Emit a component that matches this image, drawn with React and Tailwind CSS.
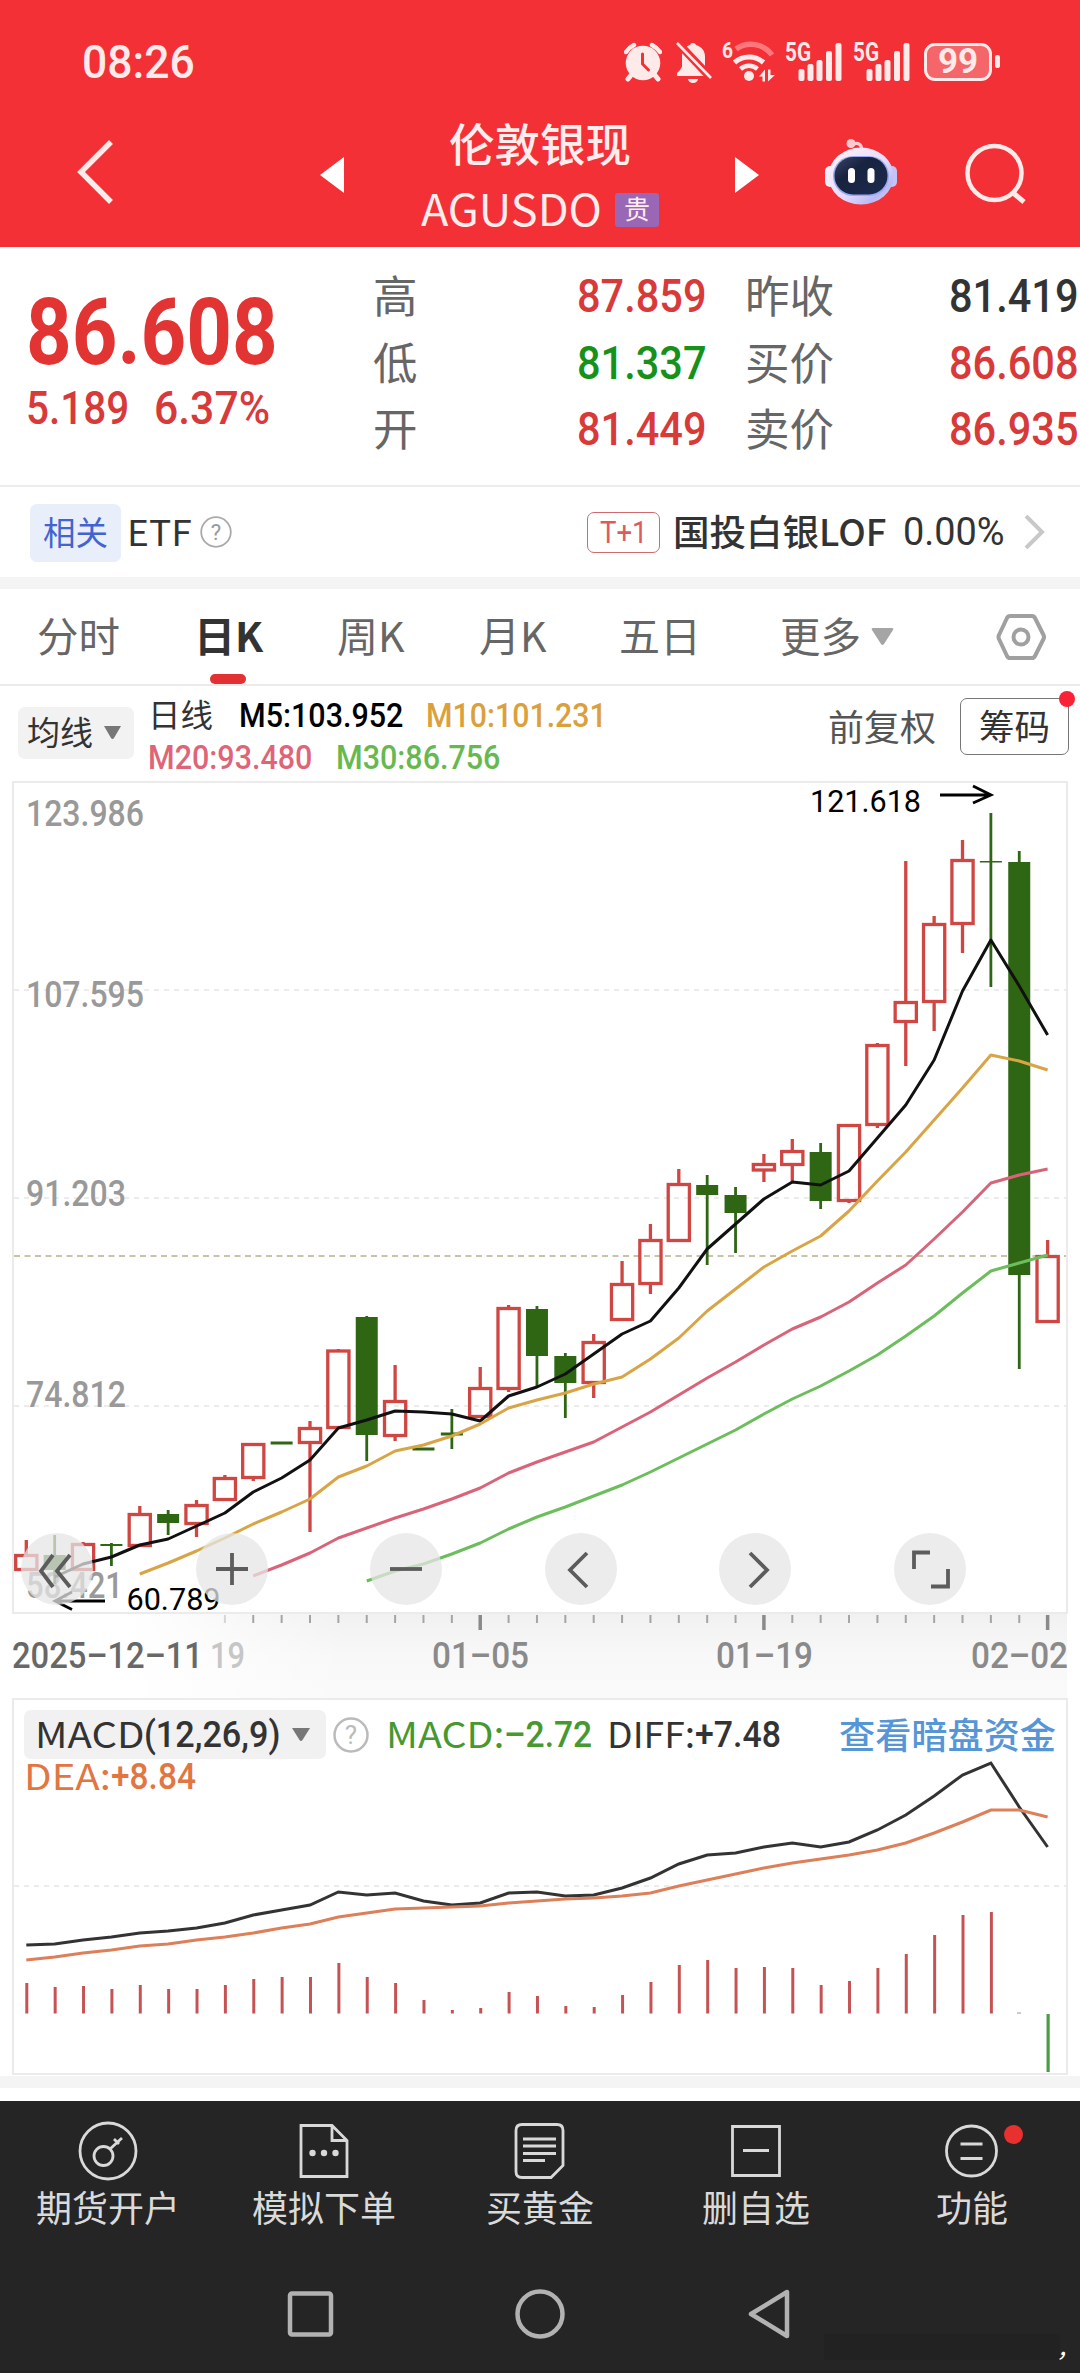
import React, { useLayoutEffect, useRef, useState } from 'react'

// Narrow numerals: squeezes the text to the given width
function Fit({ w, className = '', children }) {
  const ref = useRef(null)
  const [scale, setScale] = useState(1)

  useLayoutEffect(() => {
    if (ref.current) setScale(w / ref.current.offsetWidth)
  }, [w, children])

  return (
    <span className={`block shrink-0 leading-none ${className}`} style={{ width: w }}>
      <span ref={ref} className="inline-block origin-left whitespace-pre" style={{ transform: `scaleX(${scale})` }}>
        {children}
      </span>
    </span>
  )
}

const num = "font-['Roboto','Noto_Sans_CJK_SC',sans-serif]"

const STEP = 28.37
const px = (i) => 26.3 + STEP * i

// [type, high, top, bottom, low]
const candles = [
  ['r', 1539, 1553, 1570, 1570], ['g', 1534, 1554, 1569, 1583], ['r', 1541, 1542, 1570, 1570],
  ['g', 1542, 1543, 1545, 1565], ['r', 1505, 1512, 1546, 1546], ['g', 1509, 1513, 1522, 1534],
  ['r', 1499, 1503, 1524, 1536], ['r', 1474, 1476, 1500, 1500], ['r', 1442, 1442, 1478, 1480],
  ['g', 1441, 1440.5, 1443.5, 1443], ['r', 1420, 1426, 1443, 1531], ['r', 1348, 1348.5, 1428, 1428],
  ['g', 1315, 1316, 1434, 1460], ['r', 1364, 1399, 1436, 1440], ['g', 1447, 1446.5, 1449.5, 1449],
  ['g', 1408, 1431.5, 1434.5, 1448], ['r', 1366, 1386, 1417, 1417], ['r', 1304, 1306, 1389, 1391],
  ['g', 1305, 1308, 1355, 1386], ['g', 1352, 1355, 1382, 1417], ['r', 1333, 1340, 1383, 1397],
  ['r', 1260, 1282, 1320, 1320], ['r', 1223, 1238, 1284, 1293], ['r', 1168, 1182, 1241, 1241],
  ['g', 1174, 1184, 1194, 1264], ['g', 1186, 1194, 1212, 1252], ['r', 1153, 1162, 1170.5, 1181],
  ['r', 1138, 1149, 1165, 1180], ['g', 1142, 1151, 1200, 1208], ['r', 1123, 1123, 1201, 1202],
  ['r', 1042, 1043, 1125, 1127], ['r', 860, 1000, 1022, 1065], ['r', 915, 922, 1002, 1030],
  ['r', 839, 858, 924, 952], ['g', 812, 860, 861.5, 986], ['g', 850, 861, 1274, 1368],
  ['r', 1239, 1254, 1322, 1322],
]

const ma5 = [1576, 1563, 1556, 1544, 1538, 1525, 1512, 1491, 1477, 1459, 1427, 1419, 1410, 1411, 1413, 1420, 1395, 1386, 1373, 1353, 1333, 1320, 1287, 1248, 1223, 1198, 1181, 1184, 1170, 1137, 1104, 1059, 990, 939, 985, 1034]
const ma10 = [1573, 1562, 1550, 1537, 1523, 1511, 1498, 1476, 1465, 1450, 1444, 1435, 1423, 1407, 1399, 1392, 1383, 1376, 1358, 1337, 1310, 1288, 1266, 1250, 1235, 1210, 1180, 1151, 1119, 1087, 1054, 1060, 1069]
const ma20 = [1575, 1564, 1552, 1537, 1527, 1517, 1508, 1498, 1487, 1472, 1461, 1451, 1441, 1426, 1411, 1394, 1377, 1361, 1344, 1328, 1316, 1301, 1282, 1264, 1238, 1211, 1182, 1174, 1168]
const ma30 = [1580, 1570, 1563, 1553, 1542, 1528, 1516, 1506, 1495, 1484, 1471, 1457, 1443, 1429, 1413, 1398, 1385, 1370, 1354, 1335, 1315, 1292, 1270, 1262, 1254]

const diff = [1945, 1944, 1940, 1937, 1933, 1931, 1928, 1923, 1915, 1910, 1905, 1892, 1895, 1893, 1901, 1905, 1903, 1893, 1892, 1896, 1895, 1888, 1878, 1864, 1855, 1853, 1847, 1843, 1847, 1842, 1830, 1815, 1796, 1775, 1763, 1807, 1847]
const dea = [1960, 1957, 1953, 1950, 1946, 1944, 1940, 1937, 1933, 1928, 1924, 1917, 1913, 1909, 1908, 1907, 1906, 1903, 1901, 1899, 1898, 1896, 1893, 1886, 1880, 1874, 1868, 1863, 1859, 1855, 1850, 1843, 1833, 1822, 1810, 1810, 1817]
const macd = [1983, 1987, 1986, 1989, 1985, 1989, 1989, 1985, 1979, 1977, 1977, 1963, 1977, 1983, 2000, 2010, 2008, 1992, 1996, 2006, 2007, 1995, 1982, 1965, 1960, 1968, 1967, 1968, 1985, 1981, 1968, 1954, 1935, 1915, 1912]

const points = (ys, start) => ys.map((y, i) => `${px(i + start)},${y}`).join(' ')

function Signal() {
  return (
    <svg className="overflow-visible" width="57" height="40" viewBox="0 0 57 40" fill="#ffeaea">
      <text x="0" y="19" fontSize="25" fontWeight="700" textLength="26" lengthAdjust="spacingAndGlyphs" fontFamily="Roboto">5G</text>
      <rect x="13.5" y="27" width="6" height="12" rx="2" />
      <rect x="22.5" y="22" width="6" height="17" rx="2" />
      <rect x="31.5" y="18" width="6" height="21" rx="2" />
      <rect x="41" y="9" width="6" height="30" rx="2" />
      <rect x="50.5" y="1" width="6" height="38" rx="2" />
    </svg>
  )
}

function StatusBar() {
  return (
    <div className="flex h-[120px] items-center pt-[3px]">
      <Fit w={113} className={`${num} ml-[82px] text-[46px] font-medium text-[#ffeaea]`}>08:26</Fit>
      {/* alarm */}
      <svg className="ml-[429px]" width="38" height="40" viewBox="0 0 38 40">
        <path d="M2 10a22 22 0 0 1 8-7M28 3a22 22 0 0 1 8 7" fill="none" stroke="#ffeaea" strokeWidth="4.5" strokeLinecap="round" />
        <path d="M8 32l-4 5M30 32l4 5" stroke="#ffeaea" strokeWidth="5" strokeLinecap="round" />
        <circle cx="19" cy="21" r="17.3" fill="#ffeaea" />
        <path d="M18.5 12v10l6 6" fill="none" stroke="#f23036" strokeWidth="3" strokeLinecap="round" />
      </svg>
      {/* muted bell */}
      <svg className="ml-[13px]" width="38" height="42" viewBox="0 0 38 42">
        <path d="M18 2a3 3 0 0 1 3 2c6 2 9 6 9 12v9c0 3 4 6 4 8v2H2v-2c0-2 5-5 5-8V15c0-5 3-9 8-11a3 3 0 0 1 3-2z" fill="#ffeaea" />
        <path d="M13 38h10a5 4 0 0 1-10 0z" fill="#ffeaea" />
        <path d="M1 0l34 36" stroke="#f23036" strokeWidth="8" />
        <path d="M2 2l34 35" stroke="#ffeaea" strokeWidth="2.6" />
      </svg>
      {/* wifi 6 */}
      <svg className="ml-[9px] overflow-visible" width="52" height="42" viewBox="0 0 52 42" fill="none">
        <text x="0" y="17" fontSize="22" fontWeight="700" textLength="11" lengthAdjust="spacingAndGlyphs" fontFamily="Roboto" fill="#ffeaea">6</text>
        <path d="M14 8a26 26 0 0 1 36 6" stroke="#ff777c" strokeWidth="5.5" />
        <path d="M12.500 21.500a22 22 0 0 1 29 0" stroke="#ffeaea" strokeWidth="5" />
        <path d="M18.500 28a13 13 0 0 1 17 0" stroke="#ffeaea" strokeWidth="4.500" />
        <circle cx="27" cy="35" r="5" fill="#ffeaea" />
        <path d="M43 28.500v12h-2.500v-5H37zM46 28.500v12l7-6.500h-4.500v-5.500z" fill="#ffeaea" />
      </svg>
      <div className="ml-[11px]"><Signal /></div>
      <div className="ml-[11px]"><Signal /></div>
      <div className="ml-[14px] flex items-center">
        <div className="flex h-[38px] w-[68px] items-center justify-center rounded-[11px] border-[3px] border-[#ffeaea] bg-[#f5666a]">
          <Fit w={40} className={`${num} text-[35px] font-bold text-[#ffeaea]`}>99</Fit>
        </div>
        <div className="ml-[3px] h-[13px] w-[5px] rounded-[2px] bg-[#ffeaea]" />
      </div>
    </div>
  )
}

function Robot() {
  return (
    <svg className="ml-[65px] mt-[18px]" width="74" height="70" viewBox="0 0 74 70">
      <defs>
        <linearGradient id="shell" x1="0" y1="0" x2="1" y2="1">
          <stop offset="0" stopColor="#fff3f6" />
          <stop offset="0.55" stopColor="#e6dcfa" />
          <stop offset="0.8" stopColor="#b9b9f4" />
          <stop offset="1" stopColor="#f3dcee" />
        </linearGradient>
        <linearGradient id="face" x1="0" y1="0" x2="1" y2="1">
          <stop offset="0" stopColor="#3b4566" />
          <stop offset="0.35" stopColor="#17233f" />
          <stop offset="1" stopColor="#1d2b4d" />
        </linearGradient>
      </defs>
      <path d="M29 6c6-2 9 1 9 7" fill="none" stroke="#ffc9cf" strokeWidth="3" />
      <circle cx="27" cy="5.500" r="4.500" fill="#ffc9cf" />
      <rect x="1" y="28" width="10" height="21" rx="5" fill="#f1ebfb" />
      <rect x="63" y="28" width="10" height="21" rx="5" fill="#c3c4f6" />
      <ellipse cx="37" cy="38" rx="32.500" ry="28.500" fill="url(#shell)" />
      <rect x="9" y="18" width="56" height="40" rx="20" fill="#98a9f2" />
      <rect x="10.500" y="19" width="53" height="37.500" rx="18.500" fill="url(#face)" />
      <rect x="24" y="30" width="7" height="15" rx="3.500" fill="#fff" />
      <rect x="43.500" y="30" width="7" height="15" rx="3.500" fill="#fff" />
    </svg>
  )
}

function Header() {
  return (
    <header className="h-[247px] bg-[#f23036]">
      <StatusBar />
      <div className="flex h-[127px] items-start">
        <svg className="ml-[76px] mt-[20px]" width="38" height="64" viewBox="0 0 38 64" fill="none">
          <path d="M35 2L5 32l30 30" stroke="#ffeaea" strokeWidth="5.500" />
        </svg>
        <svg className="ml-[206px] mt-[37px]" width="24" height="36" viewBox="0 0 24 36">
          <path d="M24 0v36L0 18z" fill="#fff" />
        </svg>
        <div className="ml-[77px] w-[238px] text-[#ffecec]">
          <p className="text-center text-[45.500px] font-medium leading-[44px]">伦敦银现</p>
          <div className="mt-[21px] flex items-center">
            <Fit w={181} className="text-[44px] leading-[44px]">AGUSDO</Fit>
            <span className="ml-[13px] mt-[5px] flex h-[34px] w-[44px] items-center justify-center rounded-[3px] bg-[#9a66b6] pb-[3px] text-[26px] leading-none">贵</span>
          </div>
        </div>
        <svg className="ml-[76px] mt-[37px]" width="24" height="36" viewBox="0 0 24 36">
          <path d="M0 0v36l24-18z" fill="#fff" />
        </svg>
        <Robot />
        <svg className="ml-[64px] mt-[22px]" width="66" height="66" viewBox="0 0 66 66" fill="none" stroke="#ffeaea">
          <circle cx="32.500" cy="31" r="27" strokeWidth="4.500" />
          <path d="M50 50l12 10" strokeWidth="5" />
        </svg>
      </div>
    </header>
  )
}

const stats = [
  ['高', '87.859', 'text-[#d83a3a]'], ['昨收', '81.419', 'text-[#333333]'],
  ['低', '81.337', 'text-[#16911a]'], ['买价', '86.608', 'text-[#d83a3a]'],
  ['开', '81.449', 'text-[#d83a3a]'], ['卖价', '86.935', 'text-[#d83a3a]'],
]

function Quote() {
  return (
    <section className="flex h-[240px] border-b-2 border-[#ececec]">
      <div className="w-[373px] shrink-0 pl-[26px] pt-[40px]">
        <Fit w={252} className={`${num} h-[92px] text-[92px] font-bold text-[#e23432]`}>86.608</Fit>
        <div className={`${num} mt-[6px] flex gap-[25px] text-[46px] font-medium text-[#d83a3a]`}>
          <Fit w={103}>5.189</Fit>
          <Fit w={116}>6.37%</Fit>
        </div>
      </div>
      <div className="grid h-[200px] grid-cols-[334px_334px] gap-x-[38px] pt-[16px]">
        {stats.map(([label, value, color]) => (
          <div key={label} className="flex h-[66.5px] items-center">
            <span className="w-[205px] pb-[4px] text-[44.500px] leading-none text-[#666666]">{label}</span>
            <Fit w={130} className={`${num} text-[46px] font-medium ${color}`}>{value}</Fit>
          </div>
        ))}
      </div>
    </section>
  )
}

function Related() {
  return (
    <section className="flex h-[90px] items-center text-[#333333]">
      <span className="ml-[30px] mt-px flex h-[58px] w-[91px] items-center justify-center rounded-[7px] bg-[#e9eefb] pb-[3px] text-[32.500px] leading-none text-[#4364cf]">相关</span>
      <Fit w={65} className="ml-[6px] pb-[5px] text-[36px]">ETF</Fit>
      <svg className="ml-[8px]" width="32" height="32" viewBox="0 0 32 32" fill="none">
        <circle cx="16" cy="16" r="14.800" stroke="#aaa" strokeWidth="1.800" />
        <text x="16" y="24" fontSize="22" textAnchor="middle" fontFamily="Roboto" fill="#999">?</text>
      </svg>
      <span className="ml-[355px] flex h-[41px] w-[73px] items-center justify-center rounded-[7px] border-[1.500px] border-[#d06a6e]">
        <Fit w={48} className={`${num} text-[31px] text-[#dc5a60]`}>T+1</Fit>
      </span>
      <Fit w={213} className="ml-[13px] pb-[5px] text-[36px] font-medium">国投白银LOF</Fit>
      <Fit w={102} className={`${num} ml-[17px] text-[39px]`}>0.00%</Fit>
      <svg className="ml-[18px]" width="24" height="34" viewBox="0 0 24 34" fill="none">
        <path d="M3 1l16 16L3 33" stroke="#c8c8c8" strokeWidth="4" />
      </svg>
    </section>
  )
}

function Tabs() {
  return (
    <nav className="flex h-[97px] items-center border-b-2 border-[#ebebeb] text-[40.500px] leading-none text-[#666666]">
      <Fit w={83} className="ml-[37px] pb-[3px]">分时</Fit>
      <div className="relative ml-[74px]">
        <Fit w={69} className="pb-[3px] font-bold text-[#333333]">日K</Fit>
        <span className="absolute -bottom-[26px] left-[16px] h-[10px] w-[36px] rounded-full bg-[#e23033]" />
      </div>
      <Fit w={68} className="ml-[74px] pb-[3px]">周K</Fit>
      <Fit w={68} className="ml-[74px] pb-[3px]">月K</Fit>
      <Fit w={82} className="ml-[72px] pb-[3px]">五日</Fit>
      <Fit w={81} className="ml-[79px] pb-[3px]">更多</Fit>
      <svg className="ml-[10px]" width="23" height="19" viewBox="0 0 23 19">
        <path d="M2 1h19q2 0 1 2l-9 14q-1.500 2-3 0L1 3q-1-2 1-2z" fill="#a5a5a5" />
      </svg>
      <svg className="ml-[102px]" width="50" height="48" viewBox="0 0 50 48" fill="none" stroke="#a0a0a0" strokeWidth="4">
        <path d="M14 3h22q2 0 3 2l8.500 17q1 2 0 4L39 43q-1 2-3 2H14q-2 0-3-2L3 26q-1-2 0-4L11 5q1-2 3-2z" />
        <circle cx="25" cy="24" r="7.500" />
      </svg>
    </nav>
  )
}

function Legend() {
  return (
    <section className="flex h-[95px] items-start">
      <span className="ml-[18px] mt-[21px] flex h-[52px] w-[116px] items-center rounded-[7px] bg-[#f2f2f2] pl-[9px]">
        <Fit w={66} className="pb-[4px] text-[33px] text-[#333333]">均线</Fit>
        <svg className="ml-[10px]" width="19" height="14" viewBox="0 0 19 14">
          <path d="M1 0h17l-7 12q-1.500 2-3 0z" fill="#777" />
        </svg>
      </span>
      <div className={`${num} ml-[14px] pt-[8px] text-[34px] font-medium`}>
        <div className="flex h-[42px] items-center">
          <Fit w={65} className="pb-[4px] font-['Noto_Sans_CJK_SC',sans-serif] text-[32px] font-normal text-[#333333]">日线</Fit>
          <Fit w={164} className="ml-[26px] text-black">M5:103.952</Fit>
          <Fit w={181} className="ml-[23px] text-[#dba03c]">M10:101.231</Fit>
        </div>
        <div className="flex h-[42px] items-center">
          <Fit w={164} className="text-[#df6478]">M20:93.480</Fit>
          <Fit w={164} className="ml-[24px] text-[#68b850]">M30:86.756</Fit>
        </div>
      </div>
      <Fit w={108} className="ml-[221px] mt-[21px] text-[36px] text-[#555555]">前复权</Fit>
      <div className="relative ml-[24px] mt-[12px] flex h-[57px] w-[109px] items-center justify-center rounded-[7px] border-[1.500px] border-[#777777]">
        <Fit w={71} className="pb-[4px] text-[35px] text-[#333333]">筹码</Fit>
        <span className="absolute -right-[7px] -top-[8px] h-[16px] w-[16px] rounded-full bg-[#fa2236]" />
      </div>
    </section>
  )
}

function Candle({ i, data }) {
  const [type, high, top, bottom, low] = data
  const x = px(i)
  if (type === 'g') {
    return (
      <g fill="#2f6614">
        <rect x={x - 1.4} y={high} width="2.8" height={low - high} />
        <rect x={x - 11} y={top} width="22" height={bottom - top} />
      </g>
    )
  }
  return (
    <g stroke="#cf4643" strokeWidth="3.3" fill="none">
      <path d={`M${x} ${high}V${top + 1}M${x} ${bottom - 1}V${low}`} />
      <rect x={x - 10.6} y={top + 1.5} width="21.2" height={bottom - top - 3} />
    </g>
  )
}

const circles = [
  <path d="M32 22L20 38l12 16M49 22L36 38l13 16" />,
  <path d="M36 20v32M20 36h32" />,
  <path d="M20 36h32" />,
  <path d="M42 20L25 37l17 17" />,
  <path d="M31 20l17 17-17 17" />,
  <path d="M20 36V19.500h16M54 36v17.500H37" />,
]

const yLabels = [
  ['123.986', 824.5, 116], ['107.595', 1006, 116], ['91.203', 1205, 98], ['74.812', 1405.5, 98], ['58.421', 1596.5, 95],
]

function KChart() {
  return (
    <section className="relative ml-[12px] w-[1056px]">
      <svg className="block" width="1056" height="917" viewBox="12 780 1056 917" fontFamily="Roboto">
        <defs>
          <linearGradient id="axis" x1="0" y1="0" x2="0" y2="1">
            <stop offset="0" stopColor="#f1f1f1" />
            <stop offset="0.5" stopColor="#f8f8f8" />
            <stop offset="1" stopColor="#fafafa" />
          </linearGradient>
          <linearGradient id="fade" x1="0" y1="0" x2="1" y2="0">
            <stop offset="0" stopColor="#fff" />
            <stop offset="1" stopColor="#fff" stopOpacity="0" />
          </linearGradient>
        </defs>
        <rect x="130" y="1613" width="937" height="84" fill="url(#axis)" />
        <rect x="129" y="1613" width="220" height="84" fill="url(#fade)" />
        <rect x="13" y="781" width="1054" height="831" fill="#fff" stroke="#e6e6e6" strokeWidth="1.600" />
        {[989, 1197, 1405].map((y) => (
          <path key={y} d={`M14 ${y}H1066`} stroke="#e6e6e6" strokeWidth="1.5" strokeDasharray="5 5" />
        ))}
        <path d="M14 1255H1066" stroke="#b9b089" strokeWidth="1.6" strokeDasharray="6 4.500" />
        {yLabels.map(([t, y, w]) => (
          <text key={t} x="26" y={y} fontSize="36.500" fontWeight="500" fill="#999" textLength={w + 2} lengthAdjust="spacingAndGlyphs">{t}</text>
        ))}
        {candles.map((c, i) => <Candle key={i} i={i} data={c} />)}
        <g fill="none" strokeWidth="3" strokeLinejoin="round">
          <polyline points={points(ma5, 1)} stroke="#111" />
          <polyline points={points(ma10, 4)} stroke="#d9a445" />
          <polyline points={points(ma20, 8)} stroke="#d96479" />
          <polyline points={points(ma30, 12)} stroke="#6cbd5b" />
        </g>
        <text x="810" y="811" fontSize="32" fill="#000" textLength="111" lengthAdjust="spacingAndGlyphs">121.618</text>
        <path d="M940 794h50M973 785l18 9-18 8" fill="none" stroke="#000" strokeWidth="2.8" />
        <text x="126.500" y="1609" fontSize="32" fill="#000" textLength="94" lengthAdjust="spacingAndGlyphs">60.789</text>
        <path d="M105 1600H56M72 1591l-17 9 17 8.500" fill="none" stroke="#000" strokeWidth="2.8" />
        {candles.map((_, i) => i > 6 && (
          (i - 6) % 10 === 0
            ? <path key={i} d={`M${px(i)} 1614v15`} stroke="#8a8a8a" strokeWidth="3.500" />
            : <path key={i} d={`M${px(i)} 1614v8`} stroke={i === 7 ? '#d5d5d5' : '#a5a5a5'} strokeWidth="2" />
        ))}
        <g fontSize="36.500" fontWeight="500" fill="#8a8a8a">
          <text x="12" y="1666.500" fill="#686868" textLength="191" lengthAdjust="spacingAndGlyphs">2025–12–11</text>
          <text x="210" y="1666.500" fill="#c6c6c6" textLength="35" lengthAdjust="spacingAndGlyphs">19</text>
          <text x="432" y="1666.500" textLength="97" lengthAdjust="spacingAndGlyphs">01–05</text>
          <text x="716" y="1666.500" textLength="97" lengthAdjust="spacingAndGlyphs">01–19</text>
          <text x="971" y="1666.500" textLength="97" lengthAdjust="spacingAndGlyphs">02–02</text>
        </g>
      </svg>
      <div className="absolute left-[9px] top-[752px] flex gap-[102.500px]">
        {circles.map((icon, i) => (
          <button key={i} className="h-[72px] w-[72px] rounded-full bg-[#e6e6e6]/75">
            <svg width="72" height="72" viewBox="0 0 72 72" fill="none" stroke="#5c5c5c" strokeWidth="3.800">{icon}</svg>
          </button>
        ))}
      </div>
    </section>
  )
}

function Macd() {
  return (
    <section className="ml-[12px] h-[377px] w-[1056px] border-2 border-[#ebebeb] pt-[10px]">
      <div className="flex h-[49px] items-center">
        <span className="ml-[10px] flex h-[49px] w-[302px] items-center rounded-[7px] bg-[#f1f1f1] pl-[11px]">
          <span className="flex items-center text-[#333333]">
            <Fit w={109} className="pb-[5px] text-[36px]">MACD</Fit>
            <Fit w={136} className={`${num} text-[37px] font-medium`}>(12,26,9)</Fit>
          </span>
          <svg className="ml-[11px]" width="20" height="14" viewBox="0 0 20 14">
            <path d="M1 0h18l-7.500 12q-1.500 2-3 0z" fill="#777" />
          </svg>
        </span>
        <svg className="ml-[6px]" width="38" height="38" viewBox="0 0 38 38" fill="none">
          <circle cx="19" cy="19" r="16.500" stroke="#bbb" strokeWidth="2.500" />
          <text x="19" y="28" fontSize="26" textAnchor="middle" fontFamily="Roboto" fill="#bbb">?</text>
        </svg>
        <span className="ml-[16px] flex items-center text-[#46982f]">
          <Fit w={118} className="pb-[5px] text-[36px]">MACD:</Fit>
          <Fit w={88} className={`${num} text-[37px] font-medium`}>–2.72</Fit>
        </span>
        <span className="ml-[15px] flex items-center text-[#333333]">
          <Fit w={88} className="pb-[5px] text-[36px]">DIFF:</Fit>
          <Fit w={86} className={`${num} text-[37px] font-medium`}>+7.48</Fit>
        </span>
        <Fit w={217} className="ml-[58px] pb-[4px] text-[36px] font-medium text-[#5796d6]">查看暗盘资金</Fit>
      </div>
      <div className="flex h-[34px] items-center text-[#e27642]">
        <Fit w={87} className="ml-[10px] pb-[5px] text-[36px]">DEA:</Fit>
        <Fit w={85} className={`${num} text-[37px] font-medium`}>+8.84</Fit>
      </div>
      {/* runs up beside the two text rows */}
      <svg className="-mt-[41px] block" width="1052" height="320" viewBox="14 1752 1052 320" fill="none">
        <path d="M14 1886H1066" stroke="#e6e6e6" strokeWidth="1.500" strokeDasharray="5 5" />
        {macd.map((y, i) => <path key={i} d={`M${px(i) + 0.5} ${y}V2013.500`} stroke="#c65354" strokeWidth="3" />)}
        <path d="M1017 2013h4" stroke="#bbb" strokeWidth="1.500" />
        <path d={`M${px(36) + 0.5} 2014V2072`} stroke="#4b9c46" strokeWidth="3.200" />
        <polyline points={points(diff, 0)} stroke="#333" strokeWidth="3" />
        <polyline points={points(dea, 0)} stroke="#dd7f58" strokeWidth="3" />
      </svg>
    </section>
  )
}

const navItems = [
  {
    label: '期货开户',
    icon: (
      <>
        <circle cx="32" cy="32" r="28" />
        <circle cx="27.500" cy="37" r="9.500" />
        <path d="M34 30l12-11M38 20l5 5" />
      </>
    ),
  },
  {
    label: '模拟下单',
    icon: (
      <>
        <path d="M9 6.500h31l15 15v36H9zM40 6.500v15h15" />
        <g fill="#d9d9d9" stroke="none">
          <circle cx="20.500" cy="34" r="3.200" />
          <circle cx="32" cy="34" r="3.200" />
          <circle cx="43.500" cy="34" r="3.200" />
        </g>
      </>
    ),
  },
  {
    label: '买黄金',
    icon: (
      <>
        <path d="M14 5.500h35q6 0 6 6v35L43 58.500H14q-6 0-6-6v-41q0-6 6-6z" />
        <path d="M15 20h33M15 27h33M15 34.500h33M15 41.500h22" />
      </>
    ),
  },
  { label: '删自选', icon: <path d="M8.500 7.500h47v49h-47zM19 31.500h26" /> },
  {
    label: '功能',
    badge: true,
    icon: (
      <>
        <circle cx="31.500" cy="32" r="25" />
        <path d="M20.500 25h22M20.500 39.500h22" />
      </>
    ),
  },
]

function BottomNav() {
  return (
    <footer className="h-[273px] bg-[#252525]">
      <div className="grid h-[140px] grid-cols-5">
        {navItems.map((item) => (
          <div key={item.label} className="relative flex flex-col items-center pt-[18px]">
            <svg width="64" height="64" viewBox="0 0 64 64" fill="none" stroke="#d9d9d9" strokeWidth="2.800">{item.icon}</svg>
            <span className="mt-[5px] text-[36px] leading-[36px] text-[#dadada]">{item.label}</span>
            {item.badge && <span className="absolute left-[140px] top-[24px] h-[19px] w-[19px] rounded-full bg-[#e8302f]" />}
          </div>
        ))}
      </div>
      <div className="flex items-center pt-[27px]">
        <svg className="ml-[286px]" width="50" height="54" viewBox="0 0 50 54" fill="none">
          <rect x="4" y="6.500" width="41" height="41" rx="2" stroke="#b2b2b2" strokeWidth="4.500" />
        </svg>
        <svg className="ml-[177px]" width="54" height="54" viewBox="0 0 54 54" fill="none">
          <circle cx="27" cy="27" r="22.500" stroke="#b2b2b2" strokeWidth="4.500" />
        </svg>
        <svg className="ml-[179px]" width="50" height="54" viewBox="0 0 50 54" fill="none">
          <path d="M41 5v44L5 27z" stroke="#b2b2b2" strokeWidth="4.500" strokeLinejoin="round" />
        </svg>
        <div className="ml-[28px] mt-[66px] h-[26px] w-[236px] bg-[#222222]" />
        <span className="mt-[60px] -ml-[1px] text-[26px] italic leading-none text-white">,</span>
      </div>
    </footer>
  )
}

function App() {
  return (
    <div className="h-[2373px] w-[1080px] overflow-hidden bg-white font-['Noto_Sans_CJK_SC',sans-serif]">
      <Header />
      <Quote />
      <Related />
      <div className="h-[12px] bg-[#f4f4f4]" />
      <Tabs />
      <Legend />
      <KChart />
      <Macd />
      <div className="mt-[1px] h-[12px] bg-[#f4f4f4]" />
      <div className="h-[13px]" />
      <BottomNav />
    </div>
  )
}

export default App
